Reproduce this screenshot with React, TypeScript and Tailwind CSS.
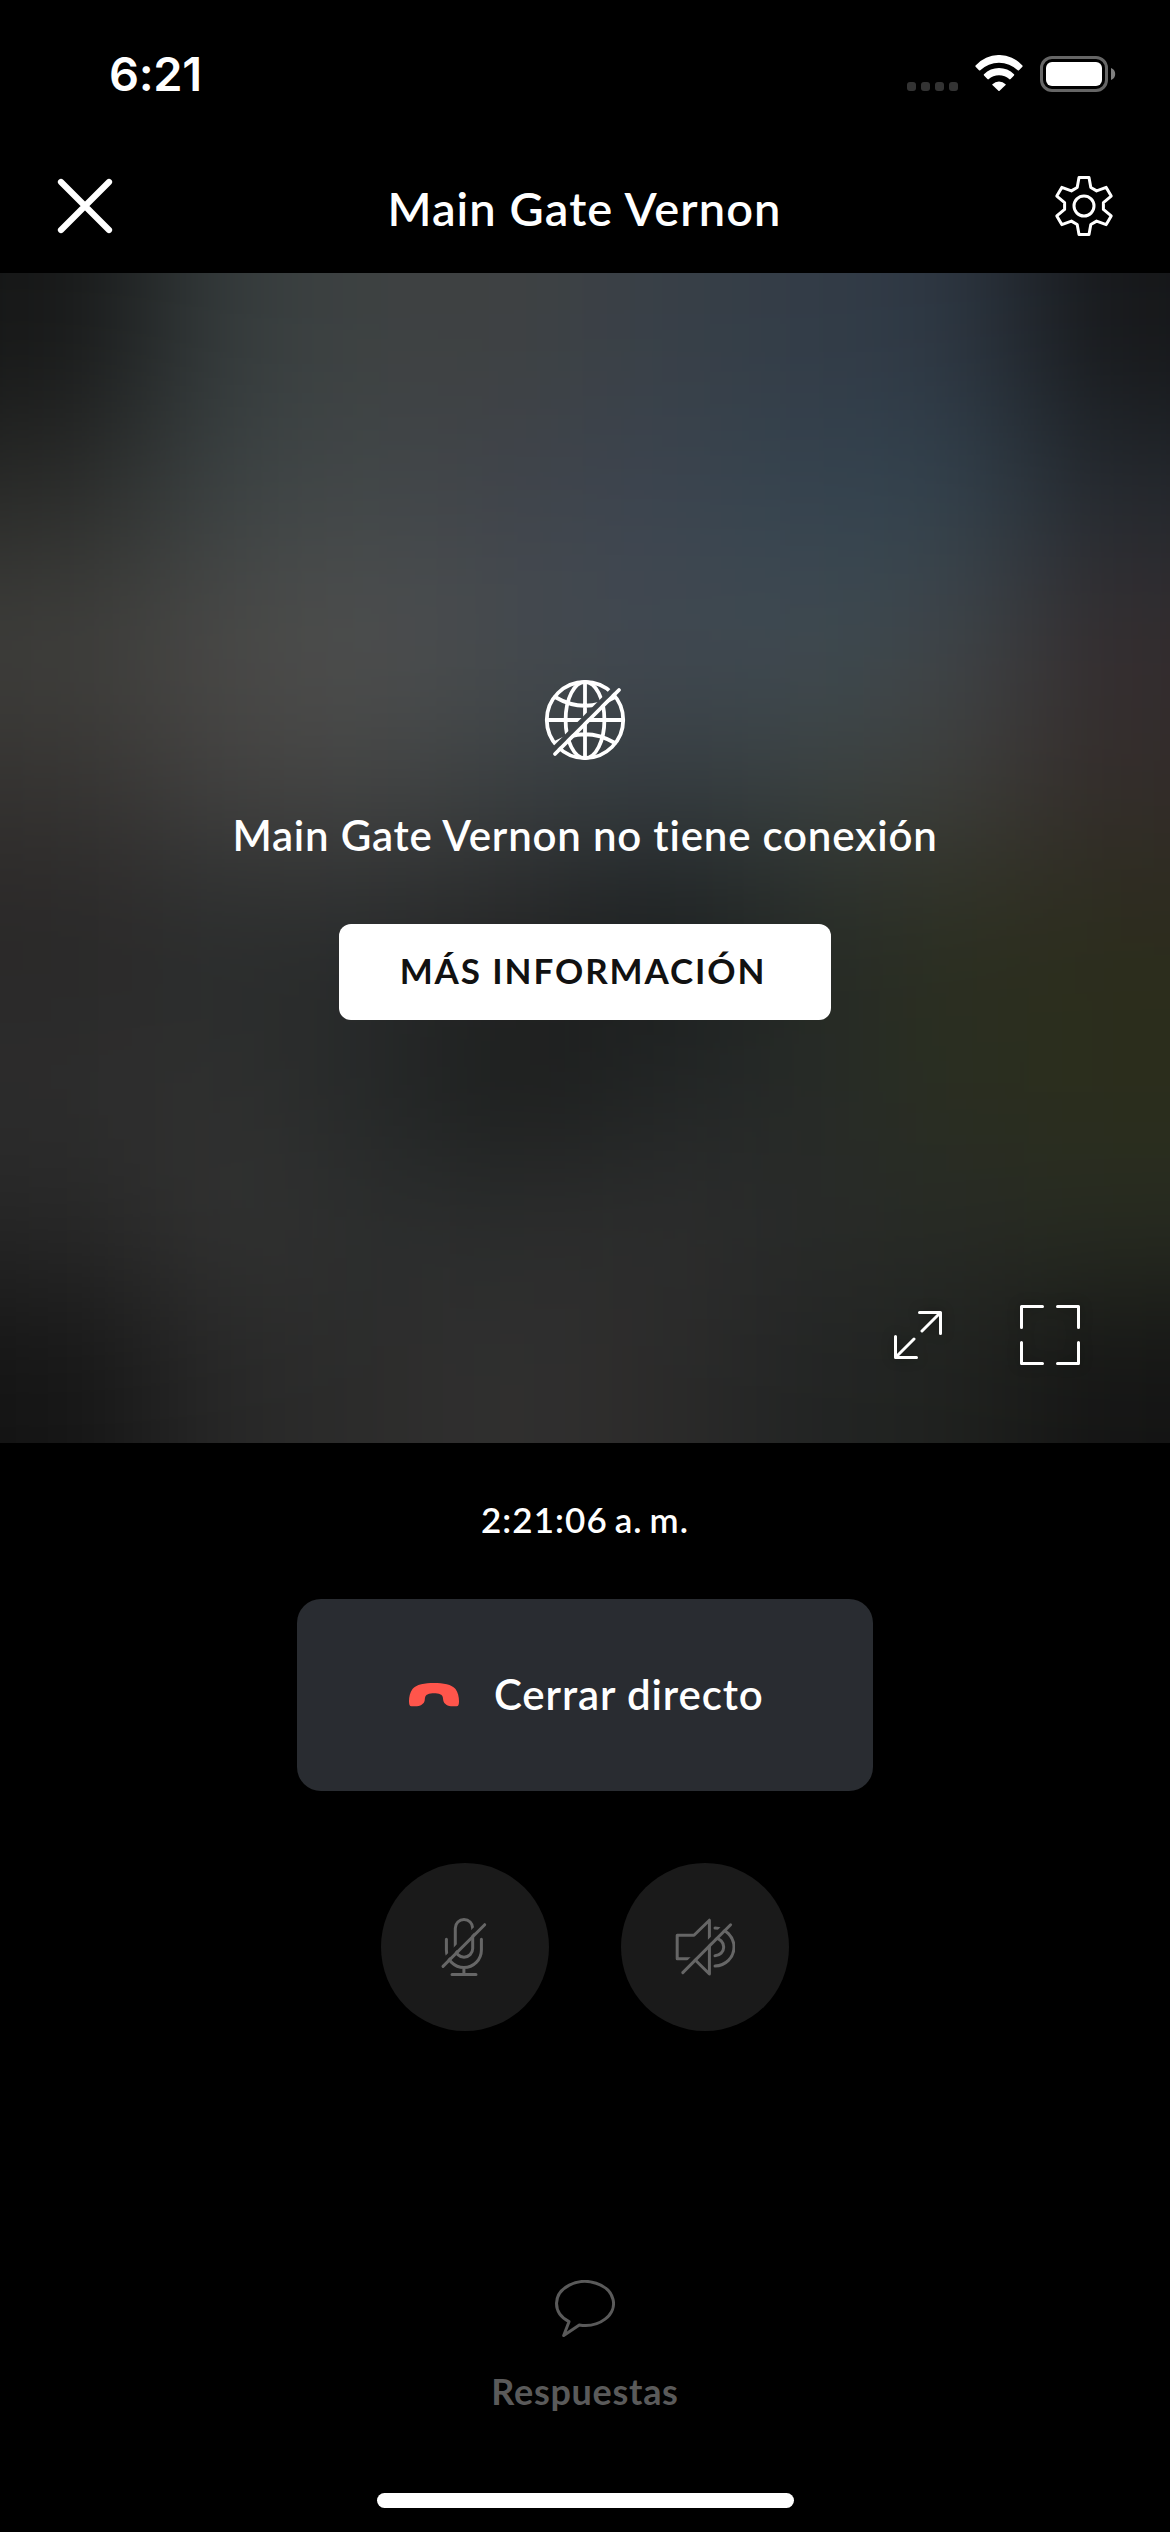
import React from "react";

const SCENE = [
  ["#161717", "#353c3d", "#3e4242", "#3f4142", "#384048", "#333c47", "#2e3844", "#161719"],
  ["#2a2b29", "#3c4344", "#434849", "#3f434b", "#3c4550", "#34434f", "#33434f", "#24292f"],
  ["#3f3f3c", "#4a4947", "#4f504f", "#464b4f", "#424a53", "#3f4b52", "#40464a", "#342d2f"],
  ["#353331", "#434241", "#454645", "#3b4042", "#353c40", "#3b4242", "#3f3f3c", "#332c2a"],
  ["#292727", "#2b2d2d", "#292b2c", "#262626", "#1a1d1e", "#252a26", "#2c2f21", "#2c2c1d"],
  ["#2d2d2d", "#2f302f", "#252828", "#1a1c1b", "#212424", "#262a28", "#2a2f20", "#2b2e1b"],
  ["#272727", "#333332", "#2c2e2e", "#2b2d2d", "#2d2e2e", "#292a29", "#282b26", "#282c22"],
  ["#141414", "#282828", "#2c2c2b", "#313030", "#2c2b2a", "#222424", "#20221f", "#141414"],
];

const clamp = (n: number) => Math.max(0, Math.min(7, n));

/** Heavily blurred last camera frame; the edge cells repeat two steps outside the frame. */
function BlurredFrame() {
  const cells: string[] = [];
  for (let r = -2; r <= 9; r++) for (let c = -2; c <= 9; c++) cells.push(SCENE[clamp(r)][clamp(c)]);
  return (
    <div className="absolute -inset-[292px] grid grid-cols-12 grid-rows-12 blur-[72px]">
      {cells.map((color, i) => (
        <div key={i} style={{ backgroundColor: color }} />
      ))}
    </div>
  );
}

function StatusBar() {
  return (
    <div className="flex h-[147px] justify-between pl-[109px] pr-[54px]">
      <div className="mt-[46px] font-[Inter,sans-serif] text-[47px] leading-[56px] font-semibold tracking-[-0.4px]">6:21</div>
      <div className="mt-[55px] flex h-[37px]">
        <div className="mt-[27px] flex gap-[5px]">
          <i className="size-[9px] rounded-[3px] bg-[#333]" />
          <i className="size-[9px] rounded-[3px] bg-[#333]" />
          <i className="size-[9px] rounded-[3px] bg-[#333]" />
          <i className="size-[9px] rounded-[3px] bg-[#333]" />
        </div>
        <svg className="ml-[17px]" width="48" height="37" viewBox="0 0 48 37" fill="#fff">
          <path d="M.6 11.8Q0 11 .6 10.4A31.5 31.5 0 0 1 47.4 10.4Q48 11 47.4 11.8L44 15.2Q43.4 15.8 42.7 15.2A27 27 0 0 0 5.3 15.2Q4.6 15.8 4 15.2Z" />
          <path d="M9 20.4Q8.4 19.8 9 19.2A21.2 21.2 0 0 1 39 19.2Q39.6 19.8 39 20.4L35.6 24Q35 24.6 34.5 24.3A15.8 15.8 0 0 0 13.5 24.3Q13 24.6 12.4 24Z" />
          <path d="M17.4 30Q17 29.6 17.4 29.2A9.6 9.6 0 0 1 30.6 29.2Q31 29.6 30.6 30L24.6 35.8Q24 36.3 23.4 35.8Z" />
        </svg>
        <svg className="ml-[17px]" width="76" height="37" viewBox="0 0 76 37">
          <rect x="1.5" y="2.5" width="65" height="33" rx="10.5" fill="none" stroke="#666" strokeWidth="3" />
          <rect x="6" y="7" width="56" height="24" rx="6" fill="#fff" />
          <path d="M71 13A6.4 6.4 0 0 1 71 25Z" fill="#808080" />
        </svg>
      </div>
    </div>
  );
}

function Header() {
  return (
    <div className="flex h-[126px] items-start justify-between pr-[56px] pl-[55px]">
      <svg className="mt-[29px]" width="60" height="60" viewBox="0 0 60 60" fill="none" stroke="#fff" strokeWidth="6.2" strokeLinecap="round">
        <path d="M6 6 54 54M54 6 6 54" />
      </svg>
      <h1 className="mt-[33px] text-[47px] leading-[56px] font-semibold tracking-[1.1px]">Main Gate Vernon</h1>
      <svg className="mt-[29px]" width="60" height="60" viewBox="0 0 60 60" fill="none" stroke="#fff" strokeWidth="3" strokeLinejoin="round">
        <path d="M25 1.5H35L36.8 11.5 42.6 14.9 52.2 11.4 57.2 20.1 49.4 26.6V33.4L57.2 39.9 52.2 48.6 42.6 45.1 36.8 48.5 35 58.5H25L23.2 48.5 17.4 45.1 7.8 48.6 2.8 39.9 10.6 33.4V26.6L2.8 20.1 7.8 11.4 17.4 14.9 23.2 11.5Z" />
        <circle cx="30" cy="30" r="10" />
      </svg>
    </div>
  );
}

function GlobeOff() {
  return (
    <svg width="84" height="84" viewBox="0 0 84 84" fill="none" stroke="#fff" strokeWidth="3.8" strokeLinecap="round">
      <mask id="globe-gap" maskUnits="userSpaceOnUse" x="0" y="0" width="84" height="84">
        <rect width="84" height="84" fill="#fff" stroke="none" />
        <path d="M2 80 80 2" stroke="#000" strokeWidth="5" strokeLinecap="butt" />
      </mask>
      <g mask="url(#globe-gap)">
        <circle cx="42" cy="42" r="38.2" />
        <ellipse cx="42" cy="42" rx="19.4" ry="38.2" />
        <path d="M42 4V80M4 42H80M12 19Q42 36.500 72 19M12 65Q42 47.500 72 65" />
      </g>
      <path d="M12 76 76 12" />
    </svg>
  );
}

function CameraView() {
  return (
    <section className="relative h-[1170px] overflow-hidden bg-[#1c1c1c]">
      <BlurredFrame />
      <div className="relative flex h-full flex-col items-center pt-[405px]">
        <GlobeOff />
        <p className="mt-[45px] text-[42px] leading-[56px] font-semibold tracking-[0.8px]">Main Gate Vernon no tiene conexión</p>
        <button className="mt-[61px] flex h-[96px] w-[492px] items-center justify-center rounded-xl bg-white pr-[4px] pb-[5px] text-[35px] leading-[44px] font-bold tracking-[1.9px] text-[#111]">
          MÁS INFORMACIÓN
        </button>
        <div className="mt-auto mr-[90px] mb-[78px] flex items-center gap-[78px] self-end drop-shadow-[0_0_6px_rgba(0,0,0,0.35)]">
          <svg width="48" height="48" viewBox="0 0 48 48" fill="none" stroke="#fff" strokeWidth="3" strokeLinecap="round" strokeLinejoin="round">
            <path d="M25.500 1.500H46.500V22.500M46 2 28 20M1.500 25.500V46.500H22.500M2 46 20 28" />
          </svg>
          <svg width="60" height="60" viewBox="0 0 60 60" fill="none" stroke="#fff" strokeWidth="3" strokeLinecap="round" strokeLinejoin="round">
            <path d="M22.500 1.500H1.500V22.500M37.500 1.500H58.500V22.500M58.500 37.500V58.500H37.500M22.500 58.500H1.500V37.500" />
          </svg>
        </div>
      </div>
    </section>
  );
}

function MicOff() {
  return (
    <svg width="60" height="60" viewBox="0 0 60 60" fill="none" stroke="#666" strokeWidth="3" strokeLinecap="round" strokeLinejoin="round">
      <mask id="mic-gap" maskUnits="userSpaceOnUse" x="0" y="0" width="60" height="60">
        <rect width="60" height="60" fill="#fff" stroke="none" />
        <path d="M0 52 52 0" stroke="#000" strokeWidth="4" />
      </mask>
      <g mask="url(#mic-gap)">
        <rect x="20.300" y="2.500" width="17.400" height="37.700" rx="8.700" />
        <path d="M11.400 22.300V33A17.500 17.500 0 0 0 46.400 33V22.300M28.900 50.500V57.500M17 57.600H41" />
      </g>
      <path d="M8 49.400 49.700 7.700" />
    </svg>
  );
}

function SpeakerOff() {
  return (
    <svg width="60" height="60" viewBox="0 0 60 60" fill="none" stroke="#666" strokeWidth="3" strokeLinecap="round" strokeLinejoin="round">
      <mask id="speaker-gap" maskUnits="userSpaceOnUse" x="0" y="0" width="60" height="60">
        <rect width="60" height="60" fill="#fff" stroke="none" />
        <path d="M0 58.500 58.500 0" stroke="#000" strokeWidth="4" />
      </mask>
      <g mask="url(#speaker-gap)">
        <path d="M20 41.700H2.200V18.300H19L34.400 3.200V57L20 42.800" />
        <path d="M40 11A19 19 0 0 1 40 49M40 21.300A8.700 8.700 0 0 1 40 38.700" />
      </g>
      <path d="M7.800 55.600 55.600 7.800" />
    </svg>
  );
}

export default function App() {
  return (
    <main className="flex h-[2532px] w-[1170px] flex-col bg-black font-[Lato,sans-serif] text-white">
      <StatusBar />
      <Header />
      <CameraView />
      <section className="flex flex-1 flex-col items-center">
        <div className="mt-[54px] text-[35px] leading-[44px] font-semibold tracking-[1.1px]">
          2:21:06<span className="[word-spacing:-3px]"> a. m.</span>
        </div>
        <button className="mt-[58px] flex h-[192px] w-[576px] items-center rounded-3xl bg-[#292c31] pb-[2px] pl-[112px]">
          <svg className="mt-[2px]" width="50" height="24" viewBox="0 0 50 24" fill="#ff554b">
            <path d="M25 0C34 0 43 1.500 46.500 6 49 9.500 50 14 50 18 50 21.500 49.500 23.300 47.500 23.300H44C38.500 23.300 35 21 34.300 17.500 33.800 13 33.500 12.500 31.500 11.500 29.500 10.300 27 10.200 25 10.200 23 10.200 20.500 10.300 18.500 11.500 16.500 12.500 16.200 13 15.700 17.500 15 21 11.500 23.300 6 23.300H2.500C.5 23.300 0 21.500 0 18 0 14 1 9.500 3.500 6 7 1.500 16 0 25 0Z" />
          </svg>
          <span className="ml-[35px] text-[42px] leading-[56px] font-semibold tracking-[0.9px]">Cerrar directo</span>
        </button>
        <div className="mt-[72px] flex gap-[72px]">
          <button className="flex size-[168px] items-center justify-center rounded-full bg-[#1a1a1a]">
            <MicOff />
          </button>
          <button className="flex size-[168px] items-center justify-center rounded-full bg-[#1a1a1a]">
            <SpeakerOff />
          </button>
        </div>
        <button className="mt-[249px] flex flex-col items-center text-[#5a5a5a]">
          <svg width="60" height="58" viewBox="0 0 60 58" fill="none" stroke="currentColor" strokeWidth="3" strokeLinejoin="round">
            <path d="M14 41.700 8.700 55.500 24.300 45.060A28.500 22 0 1 0 14 41.700Z" />
          </svg>
          <span className="mt-[31px] text-[36px] leading-[44px] font-bold tracking-[0.7px]">Respuestas</span>
        </button>
        <div className="mt-auto mb-[24px] h-[15px] w-[417px] rounded-full bg-white" />
      </section>
    </main>
  );
}
